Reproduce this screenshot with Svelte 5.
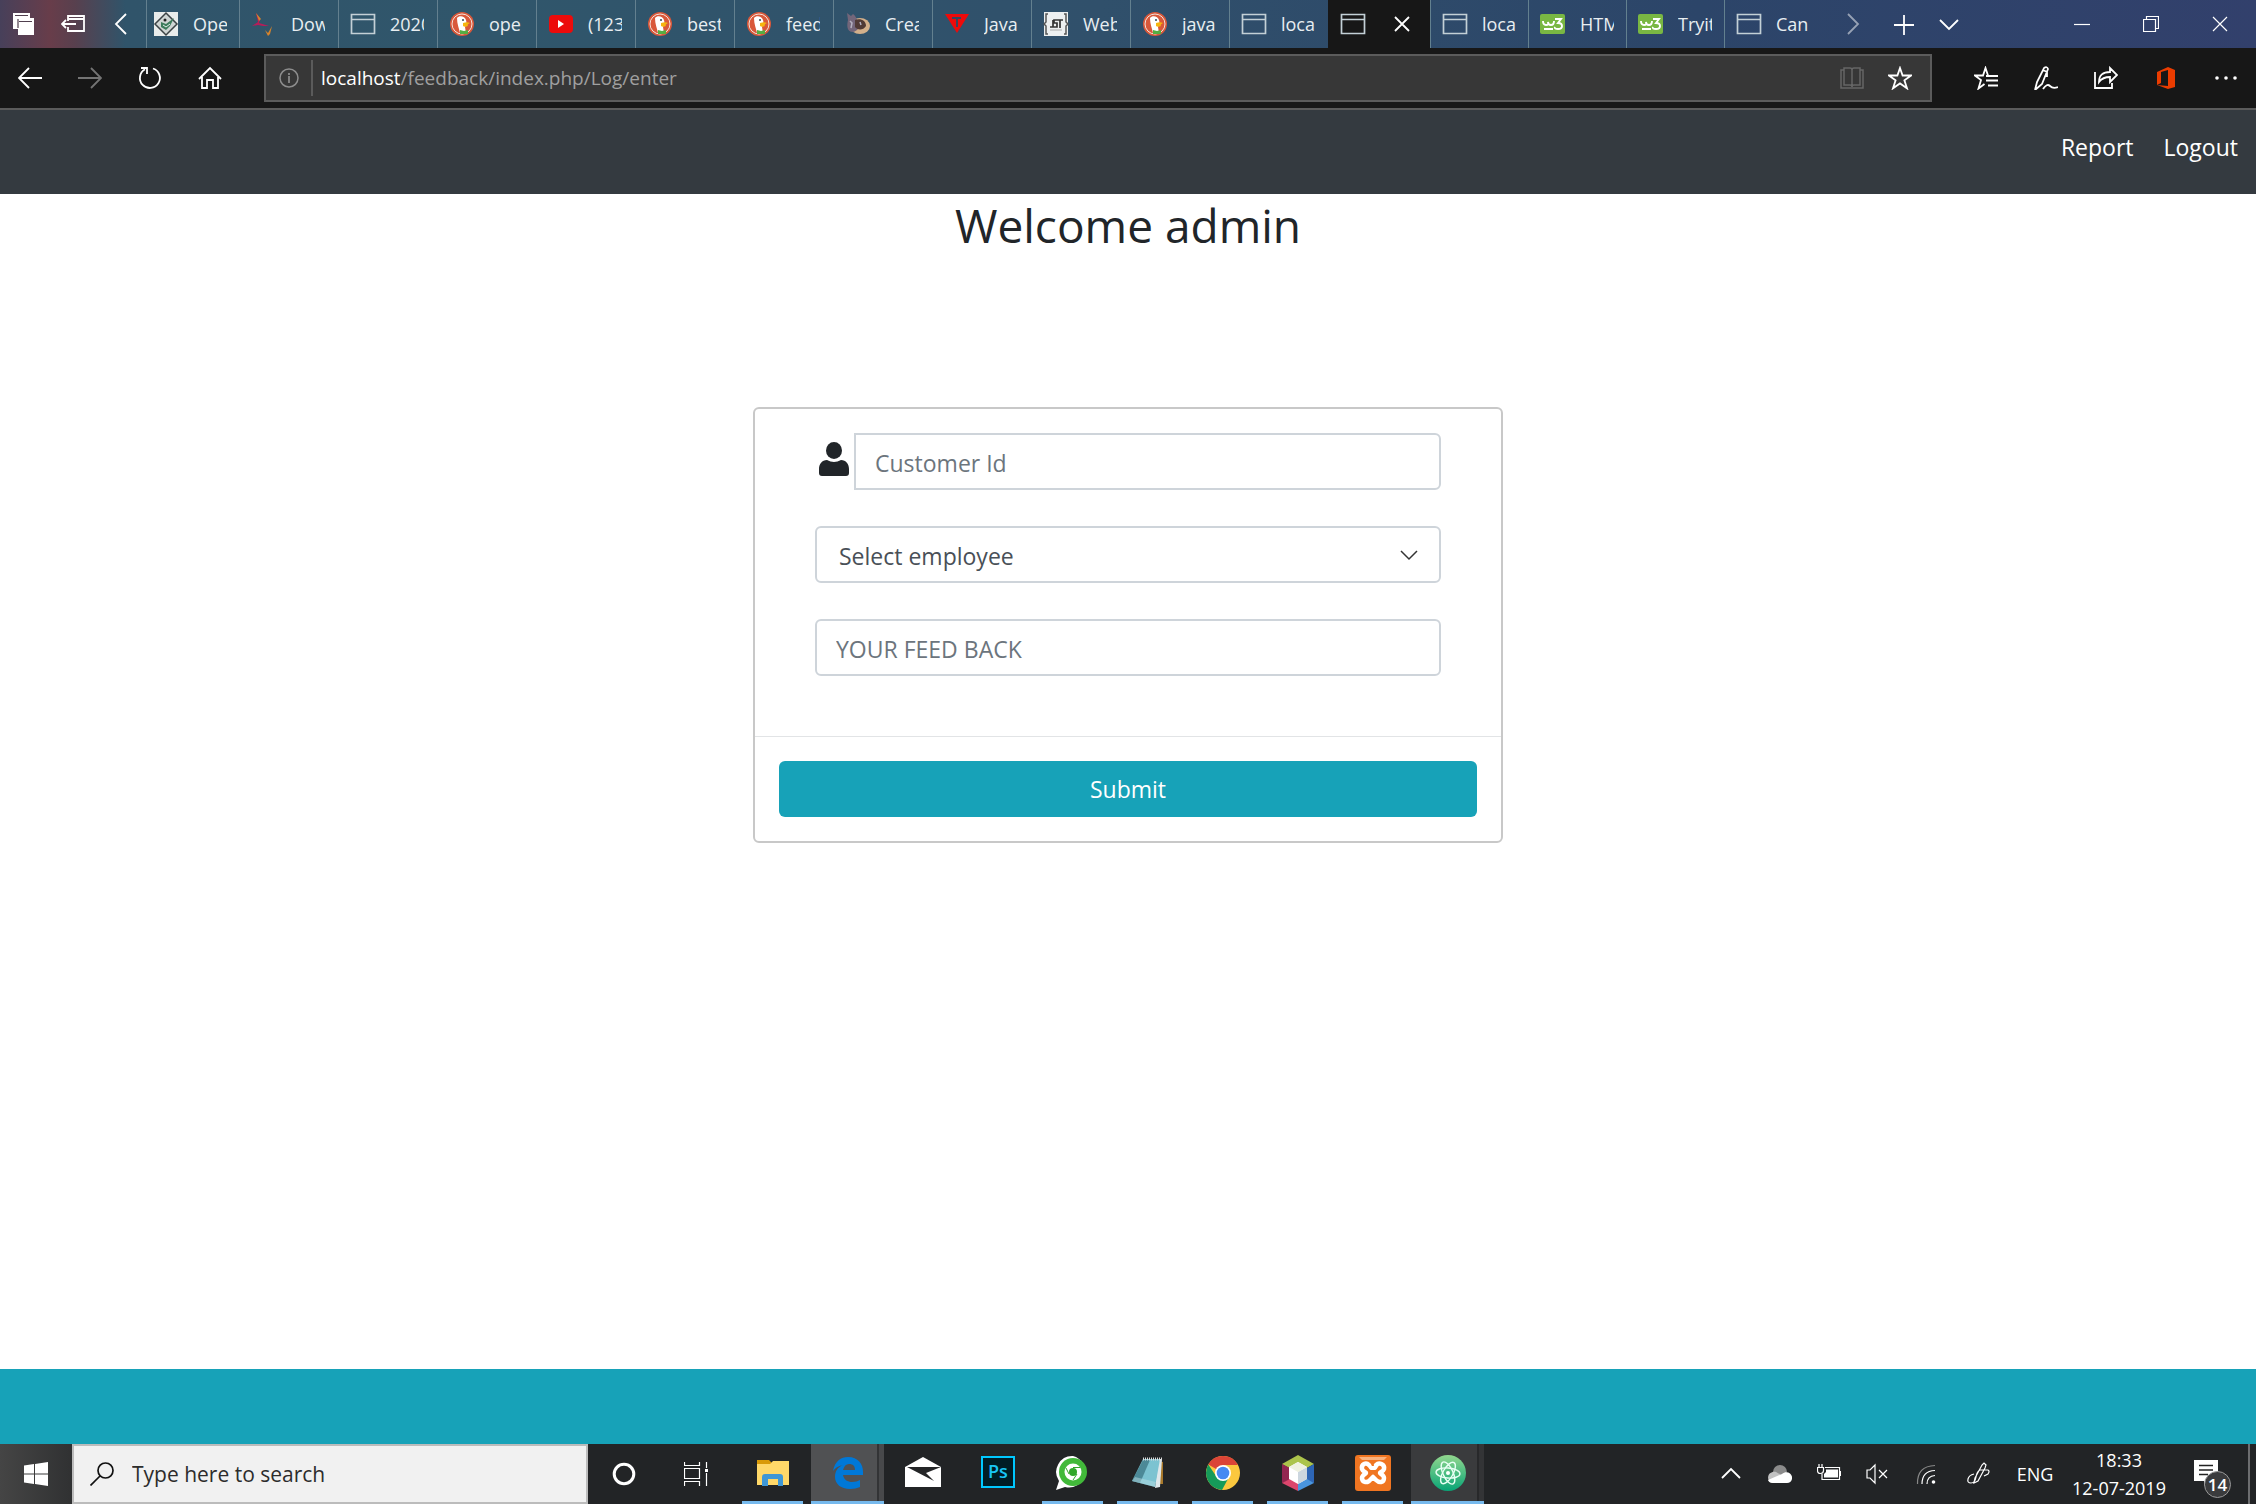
<script lang="ts">
    interface Tab {
        icon: string;
        title: string;
        active?: boolean;
    }

    const tabs: Tab[] = [
        { icon: 'diamond', title: 'Open' },
        { icon: 'tomcat', title: 'Down' },
        { icon: 'page', title: '2020' },
        { icon: 'duck', title: 'ope' },
        { icon: 'youtube', title: '(123)' },
        { icon: 'duck', title: 'best' },
        { icon: 'duck', title: 'feed' },
        { icon: 'ranch', title: 'Creat' },
        { icon: 'triangle', title: 'Java' },
        { icon: 'jst', title: 'Web' },
        { icon: 'duck', title: 'java' },
        { icon: 'page', title: 'loca' },
        { icon: 'page', title: '', active: true },
        { icon: 'page', title: 'loca' },
        { icon: 'w3', title: 'HTML' },
        { icon: 'w3', title: 'Tryit' },
        { icon: 'page', title: 'Can' }
    ];

    const apps = [
        { name: 'File Explorer', icon: 'explorer', state: 'open' },
        { name: 'Microsoft Edge', icon: 'edge', state: 'current' },
        { name: 'Mail', icon: 'mail', state: '' },
        { name: 'Photoshop', icon: 'photoshop', state: '' },
        { name: 'WhatsApp', icon: 'whatsapp', state: 'open' },
        { name: 'Notepad', icon: 'notepad', state: 'open' },
        { name: 'Chrome', icon: 'chrome', state: 'open' },
        { name: 'NetBeans', icon: 'netbeans', state: 'open' },
        { name: 'XAMPP', icon: 'xampp', state: 'open' },
        { name: 'Atom', icon: 'atom', state: 'grouped' }
    ];

    let path = $state('/feedback/index.php/Log/enter');
    let customerId = $state('');
    let employee = $state('');
    let feedback = $state('');

    function submit(event: SubmitEvent) {
        event.preventDefault();
    }
</script>

{#snippet favicon(kind: string)}
    <svg class="favicon" viewBox="0 0 26 26" aria-hidden="true">
        {#if kind === 'page'}
            <path d="M1.5 3.5h23v19h-23zM2 8.5h22" fill="none" stroke="#c3d0d6" stroke-width="1.700" />
        {:else if kind === 'duck'}
            <circle cx="13" cy="13" r="12" fill="#d9583a" />
            <circle cx="13" cy="13" r="10" fill="none" stroke="#f4e3dc" />
            <path d="M8 7c2-3 8-2 9 2 1 3 0 5-1 7l1 6c-2 1-5 1-6 0-1-5-3-9-3-15z" fill="#fff" />
            <circle cx="14" cy="9" r="1" fill="#345" />
            <path d="M14 12c3-1 5-1 7 0-2 1-3 2-2 3-2 1-4 1-5 0z" fill="#f6b50f" />
            <path d="M11 19l4 1 4-1v4h-8z" fill="#55ad43" />
        {:else if kind === 'youtube'}
            <rect x="1" y="4" width="24" height="18" rx="4" fill="#ec0b0b" />
            <path d="M10 9l6 4-6 4z" fill="#fff" />
        {:else if kind === 'w3'}
            <rect x="0" y="3" width="25" height="20" rx="2" fill="#79b743" />
            <path d="M3 10q0 4 3 4t2-3q0 3 3 3t3-4M4 18h9M15 8h6l-3 4q4 0 4 3t-4 3-3-2" fill="none" stroke="#fff" stroke-width="1.900" />
        {:else if kind === 'triangle'}
            <path d="M1 3h24L13 22z" fill="#ee0a0a" />
            <path d="M8 6h9v2h-3v8h-2V8H8z" fill="#37465c" />
        {:else if kind === 'jst'}
            <path d="M1 1h24v24H1z" fill="#edf0f1" />
            <path d="M5 3H3v8l-2 2 2 2v8h2M21 3h2v8l2 2-2 2v8h-2" fill="none" stroke="#555" stroke-width="1.500" />
            <path d="M7 16h3V9M14 9h-3v3h3v4h-4M14 9h6M17 9v8" fill="none" stroke="#333" stroke-width="1.700" />
            <path d="M7 19h12" stroke="#aaa" />
        {:else if kind === 'diamond'}
            <path d="M1 1h24v24H1z" fill="#e9eceb" />
            <path d="M13 2l11 11-11 11L2 13z" fill="#cfd5d3" stroke="#3c4345" stroke-width="1.500" />
            <path d="M8 11l5 2 8-6-4 8-4 4-5-3z" fill="#3d7c5c" />
            <path d="M10 14l3 2 4-3" fill="none" stroke="#e3efe9" />
            <circle cx="12" cy="9" r="1.500" fill="#222" />
        {:else if kind === 'tomcat'}
            <path d="M5 2l4 6-1 4 10 3-6 0-5-1-6 1 6-4z" fill="#b51d59" />
            <path d="M5 2l5 6-2 2zM14 19l3 3 4-7-2 8-2 2z" fill="#d8842b" />
        {:else if kind === 'ranch'}
            <ellipse cx="15" cy="15" rx="10" ry="8" fill="#d3b08b" />
            <path d="M2 2l4 3 2-2c4 3 3 6 6 7 2 5-1 10-6 11-7 0-6-8-5-12z" fill="#73667a" />
            <path d="M10 9c6-2 11 1 11 6-3 5-9 4-11 1z" fill="#503a35" />
            <path d="M5 10l2 2-1 5M15 11l1 3" stroke="#b4b0bf" fill="none" stroke-width="1.500" />
        {/if}
    </svg>
{/snippet}

{#snippet appIcon(kind: string)}
    <svg class="app-icon" viewBox="0 0 36 36" aria-hidden="true">
        {#if kind === 'explorer'}
            <path d="M2 5h12l3 3h13v7H2z" fill="#d99a08" />
            <path d="M2 9h13l3-3h16v24H2z" fill="#ffd869" />
            <path d="M7 31v-9q0-3 3-3h15q3 0 3 3v9h-5v-7H13v7z" fill="#3f97d6" />
        {:else if kind === 'edge'}
            <path d="M3 16C5 6 11 2 18 2c10 0 15 7 15 15v3H13c1 5 5 7 9 7 3 0 6-1 8-2v7c-3 1-6 2-10 2C11 34 5 29 5 22c0-6 3-10 8-12-5 1-8 3-10 6zm10-1h12c0-4-2-6-6-6-3 0-5 2-6 6z" fill="#0078d7" />
        {:else if kind === 'mail'}
            <path d="M0 12L18 2l18 10v20H0z" fill="#fff" />
            <path d="M0 12h36L21 18l8 8L2 12z" fill="#242527" />
        {:else if kind === 'photoshop'}
            <rect x="2" y="2" width="32" height="30" fill="#001d26" stroke="#00c8ff" stroke-width="2" />
            <text x="8" y="23" font-family="Open Sans, sans-serif" font-size="18" font-weight="600" fill="#18c5f5">Ps</text>
        {:else if kind === 'whatsapp'}
            <path d="M18 1a16 16 0 1 1-8 31l-9 3 3-9A16 16 0 0 1 18 1z" fill="#fff" />
            <circle cx="18" cy="17" r="14" fill="#42b93a" />
            <circle cx="18" cy="17" r="8.500" fill="#fff" />
            <circle cx="18" cy="17" r="4" fill="#31a72a" />
            <path d="M18 12.500h7M14 19l-3-6M22 19l-4 6" stroke="#31a72a" />
        {:else if kind === 'notepad'}
            <path d="M28 6l5 1v22h-5z" fill="#a8782a" />
            <path d="M28 4h4l-2 28-5 1z" fill="#dfe7ea" />
            <path d="M13 4h17l-5 28-23-6z" fill="#7cc3d1" />
            <path d="M13 5L2 26l8 2 10-23z" fill="#2d6270" opacity="0.6" />
            <path d="M2 26l23 6 1-5-21-5z" fill="#b5dbe2" opacity="0.5" />
            <path d="M13 4h19" stroke="#ddd" stroke-width="3" stroke-dasharray="1 1" />
        {:else if kind === 'chrome'}
            <circle cx="18" cy="18" r="17" fill="#fbc83e" />
            <path d="M18 18L3.300 9.500A17 17 0 0 1 33 10H18z" fill="#db4437" />
            <path d="M3.300 9.500A17 17 0 0 0 17 35l7-13-13-1z" fill="#159b59" />
            <circle cx="18" cy="18" r="8" fill="#fff" />
            <circle cx="18" cy="18" r="6.300" fill="#4689f2" />
        {:else if kind === 'netbeans'}
            <path d="M18 0l16 9-16 9L2 9z" fill="#acc44b" />
            <path d="M2 9l8 4v12l-8 3z" fill="#932650" />
            <path d="M34 9l-7 4v12l7 3z" fill="#2d65b5" />
            <path d="M2 28l8-4 8 4v8z" fill="#dc466d" />
            <path d="M34 28l-7-4-9 4v8z" fill="#4995df" />
            <path d="M18 7l9 5v12l-9 5-9-5V12z" fill="#fff" />
            <path d="M18 17l9-5v12l-9 5z" fill="#ccd6df" />
            <path d="M18 7l9 5-9 5-9-5z" fill="#eff1df" />
        {:else if kind === 'xampp'}
            <rect width="36" height="36" rx="3" fill="#f07521" />
            <path d="M4 2h28l-3 3H7z" fill="#f9b27e" />
            <path d="M14 10c-3-3-8-1-7 4 1 3 4 3 4 4s-4 2-4 5c0 5 6 5 8 2l3-3 3 3c3 3 8 3 8-2 0-3-4-4-4-5s3-1 4-4c1-5-5-7-8-4" fill="none" stroke="#fff" stroke-width="4.500" stroke-linecap="round" stroke-linejoin="round" />
            <path d="M14 10l2 3h4l2-3" fill="none" stroke="#fff" stroke-width="4" stroke-linejoin="round" />
        {:else if kind === 'atom'}
            <defs>
                <linearGradient id="atom-fill" x1="0" y1="0" x2="0" y2="1">
                    <stop offset="0" stop-color="#92d78e" />
                    <stop offset="1" stop-color="#08a476" />
                </linearGradient>
            </defs>
            <circle cx="18" cy="18" r="18" fill="url(#atom-fill)" />
            <g fill="none" stroke="#e8fff4" stroke-width="1.400">
                <ellipse cx="18" cy="18" rx="12" ry="5" transform="rotate(5 18 18)" />
                <ellipse cx="18" cy="18" rx="12" ry="5" transform="rotate(65 18 18)" />
                <ellipse cx="18" cy="18" rx="12" ry="5" transform="rotate(120 18 18)" />
            </g>
            <circle cx="18" cy="18" r="2" fill="#fff" />
        {/if}
    </svg>
{/snippet}

<div class="screen">
    <header class="tab-strip">
        <div class="strip-tools">
            <button class="strip-button" aria-label="Tabs you've set aside">
                <svg width="24" height="24" viewBox="0 0 24 24">
                    <path d="M1 1h17v5h4v17H6v-6H1z" fill="#fff" />
                    <path d="M3 3.500h13M7 9.500h13M6 7v9" stroke="#51404f" stroke-width="1.200" />
                </svg>
            </button>
            <button class="strip-button" aria-label="Set these tabs aside">
                <svg width="24" height="24" viewBox="0 0 24 24" class="line">
                    <path d="M7 9V4h16v15H7v-4M7 7h16M15 12H1M5 8l-4 4 4 4" />
                </svg>
            </button>
            <button class="strip-button" aria-label="Scroll tab list backward">
                <svg width="24" height="24" viewBox="0 0 24 24" class="line">
                    <path d="M16 2L6 12l10 10" />
                </svg>
            </button>
        </div>
        {#each tabs as tab, index}
            <div class="tab" class:active={tab.active} class:first={index === 0}>
                {@render favicon(tab.icon)}
                {#if tab.active}
                    <button class="close-tab" aria-label="Close tab">
                        <svg width="16" height="16" viewBox="0 0 16 16" class="line"><path d="M1 1l14 14M15 1L1 15" /></svg>
                    </button>
                {:else}
                    <span class="tab-title">{tab.title}</span>
                {/if}
            </div>
        {/each}
        <button class="strip-button forward" aria-label="Scroll tab list forward">
            <svg width="24" height="24" viewBox="0 0 24 24" class="line"><path d="M7 2l10 10L7 22" /></svg>
        </button>
        <button class="strip-button new-tab" aria-label="New tab">
            <svg width="24" height="24" viewBox="0 0 24 24" class="line"><path d="M2 13h20M12 3v20" /></svg>
        </button>
        <button class="strip-button" aria-label="Show tab previews">
            <svg width="24" height="24" viewBox="0 0 24 24" class="line"><path d="M3 8l9 9 9-9" /></svg>
        </button>
        <div class="window-controls">
            <button aria-label="Minimize">
                <svg width="16" height="16" viewBox="0 0 16 16" class="hair"><path d="M0 8.500h16" /></svg>
            </button>
            <button aria-label="Restore">
                <svg width="16" height="16" viewBox="0 0 16 16" class="hair"><path d="M.5 3.500h12v12H.5zM3.500 3.500v-3h12v12h-3" /></svg>
            </button>
            <button aria-label="Close">
                <svg width="16" height="16" viewBox="0 0 16 16" class="hair"><path d="M1 1l14 14M15 1L1 15" /></svg>
            </button>
        </div>
    </header>

    <nav class="toolbar" aria-label="Browser">
        <button class="tool" aria-label="Back">
            <svg width="24" height="24" viewBox="0 0 24 24" class="line"><path d="M24 12H1M11 2L1 12l10 10" /></svg>
        </button>
        <button class="tool dim" aria-label="Forward">
            <svg width="24" height="24" viewBox="0 0 24 24" class="line"><path d="M0 12h23M13 2l10 10-10 10" /></svg>
        </button>
        <button class="tool" aria-label="Refresh">
            <svg width="24" height="24" viewBox="0 0 24 24" class="line"><path d="M15 2.500A10 10 0 1 1 7 3.300M3 2h6v6" /></svg>
        </button>
        <button class="tool" aria-label="Home">
            <svg width="24" height="24" viewBox="0 0 24 24" class="line"><path d="M1 13L12 2l11 11M4 11v11h5v-8h6v8h5V11" /></svg>
        </button>
        <div class="address">
            <button class="site-info" aria-label="Site information">
                <svg width="20" height="20" viewBox="0 0 20 20">
                    <circle cx="10" cy="10" r="9" fill="none" stroke="#8d8d8d" stroke-width="1.500" />
                    <path d="M10 8v7M10 5v2" stroke="#8d8d8d" stroke-width="1.700" />
                </svg>
            </button>
            <label class="host" for="url">localhost</label>
            <input id="url" class="url" bind:value={path} spellcheck="false" />
            <button class="address-button" aria-label="Reading view">
                <svg width="24" height="24" viewBox="0 0 24 24" fill="none" stroke="#666" stroke-width="1.500">
                    <path d="M4 4H1v18h22V4h-3M4 2h6q2 0 2 2 0-2 2-2h6v17h-6q-2 0-2 2 0-2-2-2H4zM12 4v17" />
                </svg>
            </button>
            <button class="address-button" aria-label="Add to favorites">
                <svg width="24" height="24" viewBox="0 0 24 24" class="line"><path d="M12 2l2.600 7.500H23l-6.600 4.800 2.600 8-7-4.900-7 4.900 2.600-8L1 9.500h8.400z" /></svg>
            </button>
        </div>
        <button class="tool" aria-label="Hub">
            <svg width="24" height="24" viewBox="0 0 24 24" class="line"><path d="M14 9.500L11.500 2 9 9.500H1l6 4.500-2.500 8.500 6-4.500M12 10h12M12 14.500h12M14 19.500h10" /></svg>
        </button>
        <button class="tool" aria-label="Add notes">
            <svg width="24" height="24" viewBox="0 0 24 24" class="line"><path d="M1 24l2-8L10 2q3-2 4 1L8 18l-7 6M9 4l4 2v5M9 23q4-6 7-3t8 1" /></svg>
        </button>
        <button class="tool" aria-label="Share">
            <svg width="24" height="24" viewBox="0 0 24 24" class="line"><path d="M1 6v16h17v-5M5 16c0-7 4-10 11-10V2l7 7-7 7v-5c-5 0-8 1-11 5z" /></svg>
        </button>
        <button class="tool" aria-label="Office">
            <svg width="24" height="24" viewBox="0 0 24 24"><path d="M3 6l11-5 7 3v17l-7 2-11-4 11 1V4L7 6v11l-4 2z" fill="#eb3c00" /></svg>
        </button>
        <button class="tool" aria-label="Settings and more">
            <svg width="24" height="24" viewBox="0 0 24 24" fill="#fff"><circle cx="3" cy="12" r="1.800" /><circle cx="12" cy="12" r="1.800" /><circle cx="21" cy="12" r="1.800" /></svg>
        </button>
    </nav>

    <nav class="navbar">
        <a href="#report">Report</a>
        <a href="#logout">Logout</a>
    </nav>

    <main>
        <h1>Welcome admin</h1>

        <form class="card" onsubmit={submit}>
            <div class="card-body">
                <div class="input-group">
                    <label for="customer" aria-label="Customer Id">
                        <svg width="30" height="34" viewBox="0 0 30 34" fill="#212529">
                            <ellipse cx="15" cy="8.500" rx="8" ry="8.500" />
                            <path d="M8 18q7 4 14 0c5 0 8 4 8 9v4q0 3-3 3H3q-3 0-3-3v-4c0-5 3-9 8-9z" />
                        </svg>
                    </label>
                    <input id="customer" class="control" placeholder="Customer Id" bind:value={customerId} />
                </div>
                <div class="select-wrap">
                    <select class="control" aria-label="Select employee" bind:value={employee}>
                        <option value="">Select employee</option>
                    </select>
                    <svg class="arrow" width="18" height="18" viewBox="0 0 18 18"><path d="M1 5l8 8 8-8" fill="none" stroke="#333" stroke-width="1.500" /></svg>
                </div>
                <input class="control" aria-label="Your feed back" placeholder="YOUR FEED BACK" bind:value={feedback} />
            </div>
            <div class="card-footer">
                <button class="submit">Submit</button>
            </div>
        </form>
    </main>

    <footer class="page-footer"></footer>

    <div class="taskbar">
        <button class="start" aria-label="Start">
            <svg width="24" height="24" viewBox="0 0 24 24" fill="#fff"><path d="M0 3.500l10-1.400v9.400H0zM11 2l13-2v11.500H11zM0 12.500h10v9.400l-10-1.400zM11 12.500h13V24l-13-2z" /></svg>
        </button>
        <label class="search">
            <svg width="24" height="24" viewBox="0 0 24 24" fill="none" stroke="#111" stroke-width="1.700"><circle cx="15.500" cy="8.500" r="7.500" /><path d="M10 14L.5 23.500" /></svg>
            <input aria-label="Search" placeholder="Type here to search" />
        </label>
        <button class="system" aria-label="Cortana">
            <svg width="24" height="24" viewBox="0 0 24 24"><circle cx="12" cy="12" r="9.800" fill="none" stroke="#fff" stroke-width="3" /></svg>
        </button>
        <button class="system" aria-label="Task view">
            <svg width="24" height="24" viewBox="0 0 24 24" class="hair"><path d="M.5 0v3.500h15V0M.5 6.500h15v10H.5zM.5 24v-4.500h15V24M22.500 0v6M22.500 11v13" /><path d="M21 7h3v3h-3z" fill="#fff" stroke="none" /></svg>
        </button>
        <div class="apps">
            {#each apps as app}
                <button class="app {app.state}" aria-label={app.name}>
                    {@render appIcon(app.icon)}
                </button>
            {/each}
        </div>
        <div class="tray">
            <button class="tray-item" aria-label="Show hidden icons">
                <svg width="24" height="24" viewBox="0 0 24 24" class="line"><path d="M3 16l9-9 9 9" /></svg>
            </button>
            <button class="tray-item" aria-label="OneDrive">
                <svg width="24" height="24" viewBox="0 0 24 24">
                    <path d="M5 10a7 7 0 0 1 14 0l-3 4z" fill="#8b8b8b" />
                    <path d="M1 19c-3-6 2-10 7-9l11 6-8 5H6q-4 0-5-2z" fill="#c2c2c2" />
                    <path d="M14 12c5-4 11 0 10 5q-1 4-5 4H5q-4 0-5-3z" fill="#fff" />
                </svg>
            </button>
            <button class="tray-item" aria-label="Battery">
                <svg width="24" height="24" viewBox="0 0 24 24" class="hair">
                    <path d="M8 5.500h14.500v12H5V12M23.500 9v5M2 2v4M5 2v4M.5 5.500h6v3q0 3-3 3t-3-3z" />
                    <path d="M9 7.500h12v8H7V12l2-2z" fill="#fff" stroke="none" />
                </svg>
            </button>
            <button class="tray-item" aria-label="Volume muted">
                <svg width="24" height="24" viewBox="0 0 24 24" class="hair"><path d="M1 8h3l5-5v18l-5-5H1zM13 8l8 8M21 8l-8 8" /></svg>
            </button>
            <button class="tray-item" aria-label="Network">
                <svg width="24" height="24" viewBox="0 0 24 24" class="hair">
                    <path d="M2.500 22Q2 4 20 3.500" stroke="#888" />
                    <path d="M7 22Q7 9 20 8.500M12 22q0-8 8-8.500" />
                    <circle cx="18.500" cy="20" r="1.800" fill="#fff" stroke="none" />
                </svg>
            </button>
            <button class="tray-item pen" aria-label="Windows Ink">
                <svg width="24" height="24" viewBox="0 0 24 24" class="hair"><path d="M9 16L16 3l2-2 2 2-1 3-7 13-4 2zM8 12q-5 1-6 5t3 4 5-6 4-7h8q2 1 0 4l-4 2" /></svg>
            </button>
            <button class="language">ENG</button>
            <button class="clock">
                <span>18:33</span>
                <span>12-07-2019</span>
            </button>
            <button class="action-center" aria-label="Notifications">
                <svg width="24" height="28" viewBox="0 0 24 28"><path d="M0 0h24v21H14l-4 5v-5H0z" fill="#fff" /><path d="M5 5.500h14M5 10h14M5 14.500h9" stroke="#222" stroke-width="1.300" /></svg>
                <span class="badge">14</span>
            </button>
        </div>
    </div>
</div>

<style>
    :global(body) {
        margin: 0;
        background: #fff;
    }

    .screen {
        min-height: 100vh;
        display: flex;
        flex-direction: column;
        font-family: 'Open Sans', sans-serif;
        color: #212529;
    }

    button, input, select {
        font-family: inherit;
        box-sizing: border-box;
        margin: 0;
    }

    button {
        display: flex;
        align-items: center;
        justify-content: center;
        padding: 0;
        border: 0;
        background: none;
        color: #fff;
    }

    svg {
        display: block;
        flex: none;
    }

    .line {
        fill: none;
        stroke: #fff;
        stroke-width: 1.8;
    }

    .hair {
        fill: none;
        stroke: #fff;
        stroke-width: 1.2;
    }

    /* Tab strip */
    .tab-strip {
        display: flex;
        height: 48px;
        background: linear-gradient(90deg, #47405a 0, #683d4a 50px, #58404e 75px, #30546a 125px, #30566b 500px, #30506b 1100px, #2c4569 1700px, #32406c 100%);
    }

    .strip-tools {
        display: flex;
        width: 146px;
    }

    .strip-button {
        width: 49px;
    }

    .forward {
        width: 62px;
        opacity: 0.5;
    }

    .new-tab {
        width: 40px;
    }

    .tab {
        flex: 0 0 99px;
        box-sizing: border-box;
        display: flex;
        align-items: center;
        gap: 14px;
        padding: 0 11px;
        border-left: 1px solid #63808f;
    }

    .first {
        flex-basis: 93px;
        padding-left: 6px;
    }

    .active {
        flex-basis: 102px;
        background: #171717;
        border-color: #171717;
        gap: 28px;
    }

    .active ~ .tab {
        flex-basis: 98px;
    }

    .favicon {
        width: 26px;
        height: 26px;
    }

    .tab-title {
        width: 34px;
        overflow: hidden;
        white-space: nowrap;
        font-size: 18px;
        line-height: 28px;
        color: #e8eef1;
    }

    .window-controls {
        display: flex;
        margin-left: auto;
        margin-right: 2px;
    }

    .window-controls button {
        width: 69px;
    }

    /* Address row */
    .toolbar {
        display: flex;
        padding: 6px 0;
        background: #171717;
        border-bottom: 2px solid #5b5b5b;
    }

    .tool {
        width: 60px;
    }

    .dim {
        opacity: 0.4;
    }

    .address {
        flex: 1;
        box-sizing: border-box;
        height: 48px;
        display: flex;
        align-items: center;
        margin: 0 24px;
        border: 2px solid #5b5b5b;
        background: #373737;
        font-size: 19px;
    }

    .site-info {
        width: 47px;
        height: 36px;
        border-right: 2px solid #5b5b5b;
    }

    .host {
        padding-left: 8px;
        color: #fff;
    }

    .url {
        flex: 1;
        min-width: 0;
        padding: 0;
        border: 0;
        outline: 0;
        background: none;
        font-size: 19px;
        color: #a0a0a0;
    }

    .address-button {
        width: 48px;
        height: 44px;
    }

    .address-button:last-child {
        margin-right: 6px;
    }

    /* Page */
    .navbar {
        display: flex;
        justify-content: flex-end;
        gap: 30px;
        padding: 21px 18px 31px;
        background: #343a40;
    }

    .navbar a {
        font-size: 23px;
        line-height: 32px;
        color: #fff;
        text-decoration: none;
    }

    main {
        flex: 1;
        display: flex;
        flex-direction: column;
        align-items: center;
    }

    h1 {
        margin: 0 0 151px;
        font-size: 46px;
        line-height: 62px;
        font-weight: 400;
    }

    .card {
        width: 100%;
        max-width: 750px;
        box-sizing: border-box;
        border: 2px solid #c8c8c8;
        border-radius: 6px;
    }

    .card-body {
        display: flex;
        flex-direction: column;
        gap: 36px;
        padding: 24px 60px 60px;
    }

    .input-group {
        display: flex;
    }

    .input-group label {
        padding: 9px 5px 0 4px;
    }

    .input-group .control {
        border-radius: 0 6px 6px 0;
    }

    .control {
        width: 100%;
        height: 57px;
        padding: 2px 19px 0;
        border: 2px solid #ced4da;
        border-radius: 6px;
        background: #fff;
        font-size: 23px;
        color: #495057;
    }

    .control::placeholder {
        color: #6c757d;
        opacity: 1;
    }

    .select-wrap {
        display: grid;
        align-items: center;
    }

    .select-wrap > * {
        grid-area: 1 / 1;
    }

    select.control {
        appearance: none;
        padding-left: 22px;
    }

    .arrow {
        justify-self: end;
        margin-right: 23px;
        pointer-events: none;
    }

    .card-footer {
        padding: 24px;
        border-top: 1px solid #e2e4e6;
    }

    .submit {
        width: 100%;
        height: 56px;
        border-radius: 6px;
        background: #17a2b8;
        font-size: 23px;
    }

    .page-footer {
        height: 75px;
        background: #17a2b8;
    }

    /* Taskbar */
    .taskbar {
        display: flex;
        height: 60px;
        background: #222426;
    }

    .start {
        width: 72px;
        background: linear-gradient(90deg, #454545, #303132);
    }

    .search {
        box-sizing: border-box;
        width: 516px;
        display: flex;
        align-items: center;
        gap: 18px;
        padding: 0 16px;
        border: 2px solid #bcbcbc;
        background: #f1f1f1;
    }

    .search input {
        flex: 1;
        min-width: 0;
        padding: 0;
        border: 0;
        background: none;
        font-size: 21px;
    }

    .search input::placeholder {
        color: #2c2c2c;
        opacity: 1;
    }

    .system {
        width: 72px;
    }

    .apps {
        display: flex;
        margin-left: 3px;
    }

    .app {
        width: 75px;
        box-sizing: border-box;
        border-bottom: 3px solid transparent;
        background-clip: padding-box;
    }

    .app-icon {
        width: 36px;
        height: 36px;
    }

    .open {
        width: 61px;
        margin: 0 7px;
        border-color: #76b9ed;
    }

    .current, .grouped {
        width: 73px;
        margin: 0 1px;
        border-color: #76b9ed;
        background-image: linear-gradient(90deg, #505153 66px, #333436 66px, #333436 68px, #48494b 68px);
    }

    .grouped {
        background-image: linear-gradient(90deg, #3a3b3d 66px, #28292b 66px, #28292b 68px, #333436 68px);
    }

    .tray {
        display: flex;
        margin-left: auto;
        margin-right: 6px;
        border-right: 2px solid #6d6e70;
    }

    .tray-item {
        width: 49px;
    }

    .pen {
        width: 54px;
    }

    .language {
        width: 60px;
        font-size: 18px;
    }

    .clock {
        width: 108px;
        flex-direction: column;
        font-size: 18px;
        line-height: 28px;
    }

    .action-center {
        position: relative;
        width: 75px;
        justify-content: flex-start;
        padding-left: 21px;
    }

    /* Unread count over the notification bubble */
    .badge {
        position: absolute;
        right: 17px;
        bottom: 6px;
        box-sizing: border-box;
        width: 27px;
        height: 27px;
        border: 1px solid #999;
        border-radius: 50%;
        background: #3a3b3d;
        font-size: 17px;
        line-height: 25px;
        font-weight: 600;
    }
</style>
